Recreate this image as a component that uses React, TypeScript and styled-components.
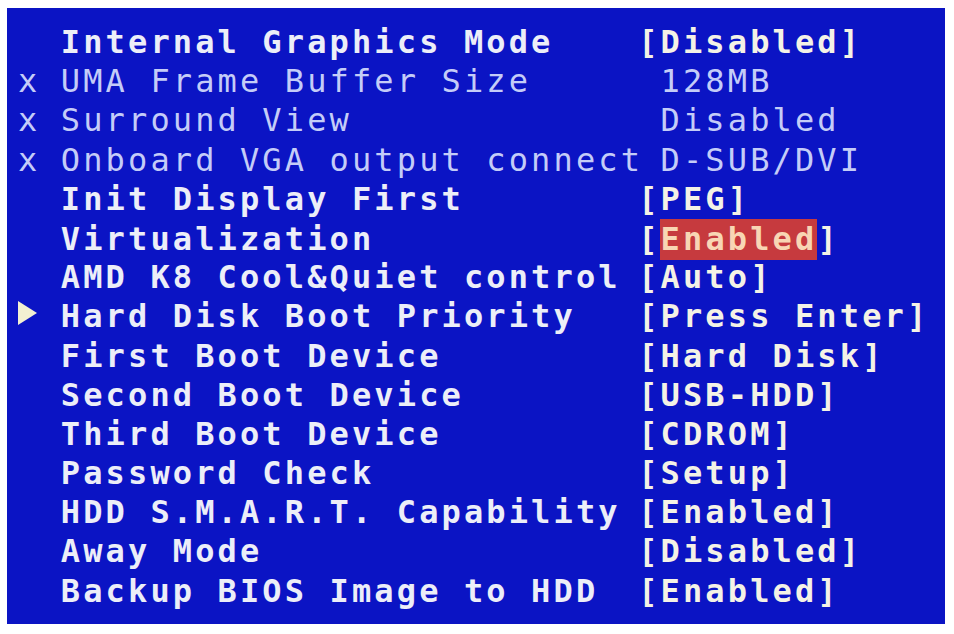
import React from "react";
import styled, { createGlobalStyle } from "styled-components";

const CH = 22.4;
const ROW = 39.2;

const Global = createGlobalStyle`
  html, body { margin: 0; padding: 0; background: #ffffff; }
  body { width: 954px; height: 634px; overflow: hidden; }
`;

const Page = styled.div`
  padding: 8px 9px 10px 7px;
  background: #ffffff;
`;

const Screen = styled.div`
  width: 938px;
  height: 616px;
  box-sizing: border-box;
  background: #0b14c4;
  padding: 15px 0 0 7px;
  display: flex;
  flex-direction: column;
  font-family: "DejaVu Sans Mono", "Liberation Mono", monospace;
  font-size: 32px;
  letter-spacing: 3.13px;
  white-space: pre;
`;

const Row = styled.div`
  display: grid;
  grid-template-columns: ${CH * 2}px ${CH * 26}px auto;
  height: ${ROW}px;
  align-items: center;
  line-height: ${ROW}px;
`;

const Marker = styled.div`
  display: flex;
  align-items: center;
  justify-content: flex-start;
  height: 100%;
`;

const Cross = styled.span`
  color: #c4ccf8;
  font-weight: normal;
  padding-left: 4px;
`;

const Arrow = styled.svg`
  width: 19px;
  height: 24px;
  margin-left: 4px;
  margin-top: -8px;
`;

const Label = styled.span<{ $dim?: boolean }>`
  padding-left: 2px;
  color: ${(p) => (p.$dim ? "#c4ccf8" : "#eceef8")};
  font-weight: ${(p) => (p.$dim ? "normal" : "bold")};
`;

const Value = styled.span<{ $dim?: boolean }>`
  padding-left: ${(p) => (p.$dim ? CH : 0)}px;
  margin-left: -3px;
  color: ${(p) => (p.$dim ? "#c4ccf8" : "#f4f2e6")};
  font-weight: ${(p) => (p.$dim ? "normal" : "bold")};
`;

const Highlight = styled.span`
  background: #c63a3e;
  color: #f8d6b4;
  display: inline-block;
  line-height: 41px;
  height: 41px;
  margin-left: -1px;
  padding-left: 1px;
`;

type Item = {
  label: string;
  value: string;
  mark?: "x" | "arrow";
  dim?: boolean;
  hl?: boolean;
};

const items: Item[] = [
  { label: "Internal Graphics Mode", value: "[Disabled]" },
  { label: "UMA Frame Buffer Size", value: "128MB", mark: "x", dim: true },
  { label: "Surround View", value: "Disabled", mark: "x", dim: true },
  { label: "Onboard VGA output connect", value: "D-SUB/DVI", mark: "x", dim: true },
  { label: "Init Display First", value: "[PEG]" },
  { label: "Virtualization", value: "Enabled", hl: true },
  { label: "AMD K8 Cool&Quiet control", value: "[Auto]" },
  { label: "Hard Disk Boot Priority", value: "[Press Enter]", mark: "arrow" },
  { label: "First Boot Device", value: "[Hard Disk]" },
  { label: "Second Boot Device", value: "[USB-HDD]" },
  { label: "Third Boot Device", value: "[CDROM]" },
  { label: "Password Check", value: "[Setup]" },
  { label: "HDD S.M.A.R.T. Capability", value: "[Enabled]" },
  { label: "Away Mode", value: "[Disabled]" },
  { label: "Backup BIOS Image to HDD", value: "[Enabled]" },
];

export default function App() {
  return (
    <Page>
      <Global />
      <Screen>
        {items.map((it) => (
          <Row key={it.label}>
            <Marker>
              {it.mark === "x" && <Cross>x</Cross>}
              {it.mark === "arrow" && (
                <Arrow viewBox="0 0 19 24">
                  <polygon points="0,0 19,12 0,24" fill="#f2f0d2" />
                </Arrow>
              )}
            </Marker>
            <Label $dim={it.dim}>{it.label}</Label>
            {it.hl ? (
              <Value>
                [<Highlight>{it.value}</Highlight>]
              </Value>
            ) : (
              <Value $dim={it.dim}>{it.value}</Value>
            )}
          </Row>
        ))}
      </Screen>
    </Page>
  );
}
